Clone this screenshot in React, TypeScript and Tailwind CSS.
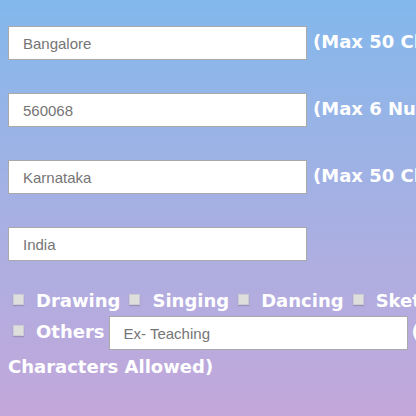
const fields = [
  { id: "city", label: "City", value: "Bangalore", hint: "(Max 50 Characters Allowed)" },
  { id: "pin", label: "Pin code", value: "560068", hint: "(Max 6 Numbers Allowed)" },
  { id: "state", label: "State", value: "Karnataka", hint: "(Max 50 Characters Allowed)" },
  { id: "country", label: "Country", value: "India", hint: "" },
];

const hobbies = ["Drawing", "Singing", "Dancing", "Sketching"];

const inputClass =
  "h-[34px] w-[299px] shrink-0 border border-[#a9a9a9] bg-white px-[14px] font-['Liberation_Sans',Arial,sans-serif] text-[15px] font-normal text-[#757575] outline-none placeholder:text-[#757575] placeholder:opacity-100";

function Hobby({ name }: { name: string }) {
  return (
    <label className="flex h-6 shrink-0 items-center">
      <input
        type="checkbox"
        name="hobby"
        value={name}
        className="mr-3 mb-1 ml-[5px] size-[11px] shrink-0 appearance-none border border-[#cbcbd3] bg-[#dedfdd] shadow-[0_1px_1px_#9c91b8] checked:bg-[#5b7fb8]"
      />
      {name}
    </label>
  );
}

export default function App() {
  return (
    <main className="min-h-screen overflow-hidden bg-linear-to-b from-[#82b8ec] to-[#c3a7da] px-2 pt-[26px] font-['DejaVu_Sans',Verdana,sans-serif] text-[18px] leading-6 font-bold whitespace-nowrap text-white">
      <form>
        <div className="flex flex-col gap-[33px]">
          {fields.map((f) => (
            <div key={f.id} className="flex items-center gap-[6px]">
              <input
                id={f.id}
                aria-label={f.label}
                placeholder={f.value}
                className={inputClass}
              />
              <label htmlFor={f.id} className="pb-[2px]">
                {f.hint}
              </label>
            </div>
          ))}
        </div>
        <fieldset className="mt-7 min-w-0">
          <div className="flex gap-1">
            {hobbies.map((h) => (
              <Hobby key={h} name={h} />
            ))}
          </div>
          <div className="mt-[3px] flex gap-1">
            <div className="mt-1">
              <Hobby name="Others" />
            </div>
            <input
              id="other"
              aria-label="Other hobby"
              placeholder="Ex- Teaching"
              className={inputClass}
            />
            <label htmlFor="other" className="mt-1">
              (Max 30
            </label>
          </div>
          <p className="mt-[5px]">Characters Allowed)</p>
        </fieldset>
      </form>
    </main>
  );
}
